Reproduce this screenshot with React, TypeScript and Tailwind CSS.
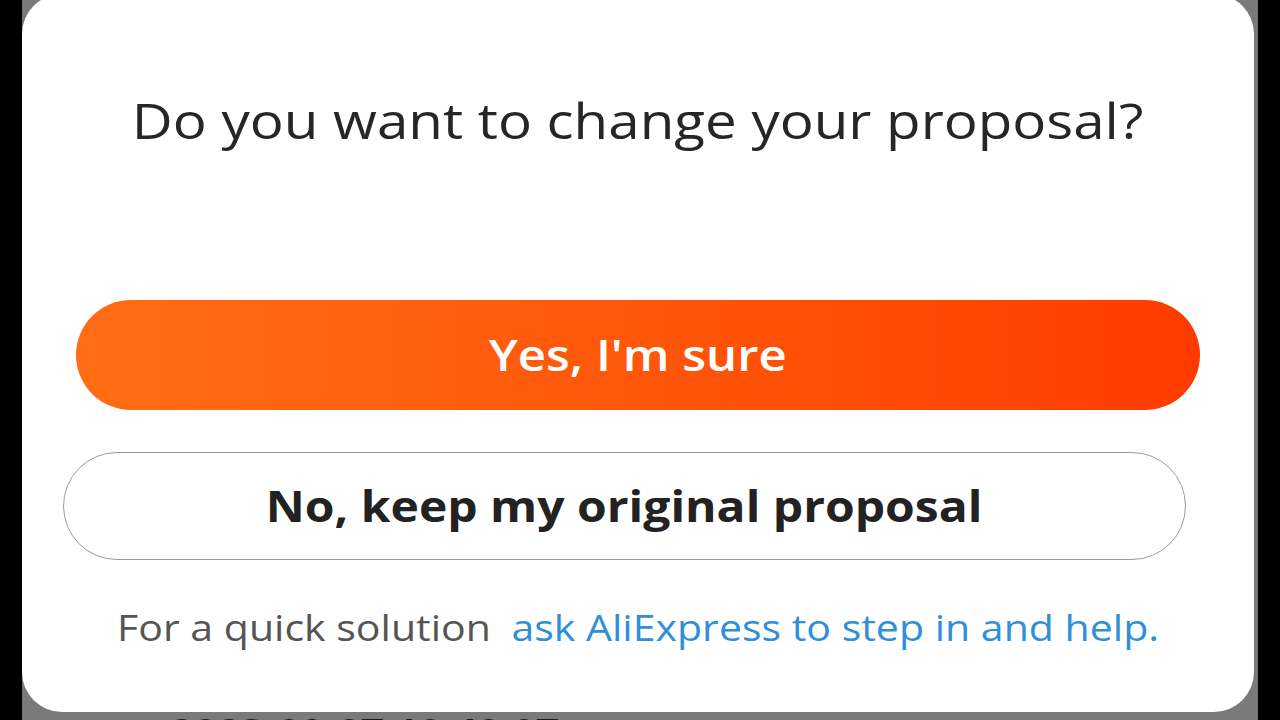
import React from "react";

export default function App() {
  return (
    <div className="flex h-[720px] w-[1280px] overflow-hidden bg-black" style={{ fontFamily: '"Open Sans", "Noto Sans", sans-serif' }}>
      <div className="ml-[22px] flex h-[720px] w-[1236px] flex-col overflow-hidden bg-[#7a7a7a]">
        <div className="-mt-[6px] flex h-[718px] w-[1232px] shrink-0 flex-col items-center rounded-[40px] bg-white">
          <h1 className="mt-[94px] scale-x-[1.13] whitespace-nowrap text-[50px] font-normal leading-[64px] text-[#262626]">
            Do you want to change your proposal?
          </h1>
          <button className="mt-[148px] flex h-[110px] w-[1124px] items-center justify-center rounded-full bg-gradient-to-r from-[#ff6d14] to-[#ff3a00] text-white">
            <span className="inline-block scale-x-[1.14] whitespace-nowrap text-[43px] font-semibold">Yes, I'm sure</span>
          </button>
          <button className="mt-[42px] -ml-[27px] flex h-[108px] w-[1123px] items-center justify-center rounded-full border border-[#9a9a9a] bg-white text-[#222]">
            <span className="inline-block scale-x-[1.13] whitespace-nowrap text-[42.5px] font-bold">No, keep my original proposal</span>
          </button>
          <p className="mt-[43px] scale-x-[1.14] whitespace-nowrap text-[36px] leading-[50px]">
            <span className="text-[#555]">For a quick solution</span>
            <span className="ml-[18px] text-[#2f8fd8]">ask AliExpress to step in and help.</span>
          </p>
        </div>
        <div className="mt-[2px] origin-left scale-x-[1.14] whitespace-nowrap pl-[130px] text-[36px] font-bold leading-none text-[#1a1a1a]">
          2023-09-07 10:40:07
        </div>
      </div>
    </div>
  );
}
